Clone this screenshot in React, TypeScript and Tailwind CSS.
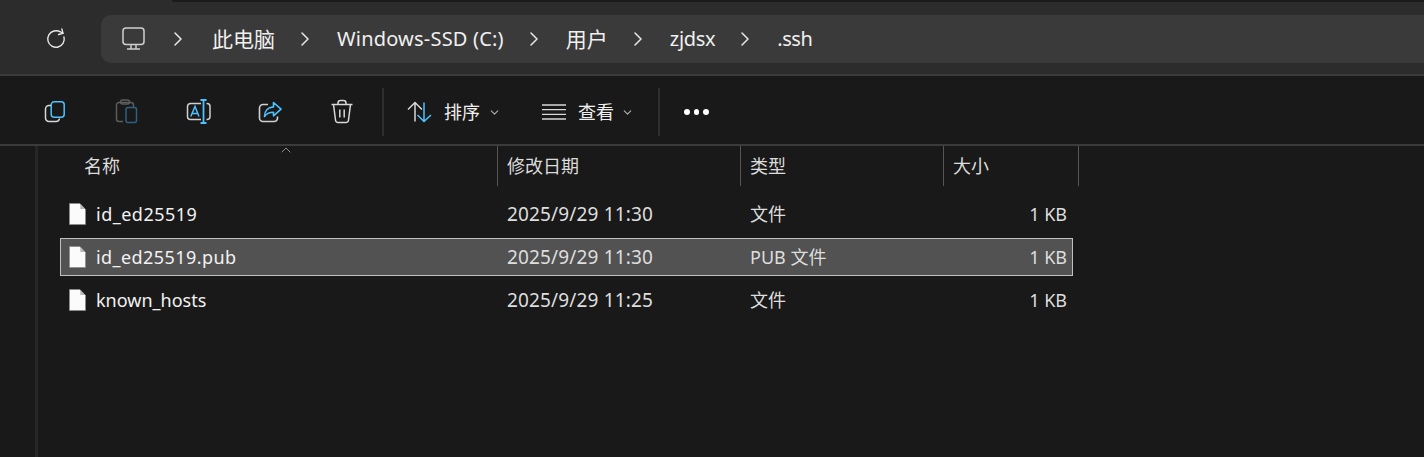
import { RotateCw, ChevronRight, ChevronDown, ChevronUp } from 'lucide-react';

const font = '[font-family:"Noto_Sans","Noto_Sans_CJK_SC",sans-serif]';

const blue = '#4cc2ff';

function CopyIcon() {
  return (
    <svg width="24" height="24" viewBox="0 0 24 24" fill="none" strokeWidth="1.5">
      <rect x="8.2" y="1.8" width="13" height="15.5" rx="3" stroke={blue} />
      <path d="M8 5.5H6A3.5 3.5 0 0 0 2.5 9v9A3.5 3.5 0 0 0 6 21.5h7a3.5 3.5 0 0 0 3.5-3" stroke="#d8d8d8" />
    </svg>
  );
}

function PasteIcon() {
  return (
    <svg width="24" height="26" viewBox="0 0 24 26" fill="none" strokeWidth="1.5">
      <path d="M9 22.5H5A2.5 2.5 0 0 1 2.5 20V6A2.5 2.5 0 0 1 5 3.5h12A2.5 2.5 0 0 1 19.5 6v2" stroke="#5c5c5c" />
      <rect x="6.5" y="1" width="9" height="4" rx="2" stroke="#5c5c5c" />
      <rect x="12" y="8.5" width="10.5" height="15" rx="2" stroke="#2c6280" />
    </svg>
  );
}

function RenameIcon() {
  return (
    <svg width="26" height="26" viewBox="0 0 26 26" fill="none" strokeWidth="1.5">
      <path d="M15 4.5H4.5A3 3 0 0 0 1.5 7.5v10a3 3 0 0 0 3 3H15" stroke="#d0d0d0" />
      <path d="M20.5 4.5h.5a3 3 0 0 1 3 3v10a3 3 0 0 1-3 3h-.5" stroke="#d0d0d0" />
      <path d="M14.5 1h6M14.5 24h6M17.5 1v23" stroke={blue} strokeWidth="1.8" />
      <path d="M4.8 17.5 9 7.5l4 10M6 14.5h6" stroke={blue} />
    </svg>
  );
}

function ShareIcon() {
  return (
    <svg width="24" height="24" viewBox="0 0 24 24" fill="none" strokeWidth="1.6">
      <path d="M10 4.5H5A3.5 3.5 0 0 0 1.5 8v10A3.5 3.5 0 0 0 5 21.500h11a3.500 3.500 0 0 0 3.500-3v-2" stroke="#d0d0d0" />
      <path d="M15.500 2.500 23 9.200l-7.500 6.600v-3.600c-4 0-7 1-9 4.300 0-5.500 3.300-9.300 9-9.600z" stroke={blue} strokeLinejoin="round" />
    </svg>
  );
}

function TrashIcon() {
  return (
    <svg width="24" height="26" viewBox="0 0 24 26" fill="none" stroke="#d8d8d8" strokeWidth="1.5">
      <path d="M1.500 5.500h21M8 5.500V4a2.500 2.500 0 0 1 2.500-2.500h3A2.500 2.500 0 0 1 16 4v1.500" />
      <path d="M3.500 5.500 5.500 21a2.500 2.500 0 0 0 2.500 2.500h8a2.500 2.500 0 0 0 2.500-2.500l2-15.500" />
      <path d="M9.800 10.500v8M14.200 10.500v8" />
    </svg>
  );
}

function SortIcon() {
  return (
    <svg width="26" height="22" viewBox="0 0 26 22" fill="none" strokeWidth="1.5">
      <path d="M8 20.500V1.500M1 8.500l7-7 7 7" stroke="#d8d8d8" />
      <path d="M17 1.500v19M10.500 14l6.500 6.500 7-6.500" stroke={blue} />
    </svg>
  );
}

function ViewIcon() {
  return (
    <svg width="24" height="16" viewBox="0 0 24 16" fill="none" stroke="#d8d8d8" strokeWidth="1.300">
      <path d="M0 1h24M0 5.700h24M0 10.300h24M0 15h24" />
    </svg>
  );
}

function MonitorIcon() {
  return (
    <svg width="24" height="24" viewBox="0 0 24 24" fill="none" stroke="#d0d0d0" strokeWidth="1.500">
      <rect x="1" y="1" width="21" height="16.500" rx="3" />
      <path d="M9 17.500v4M14 17.500v4M5 22h13" />
    </svg>
  );
}

function FileIcon() {
  return (
    <svg width="17" height="22" viewBox="0 0 18 22" preserveAspectRatio="none">
      <path d="M0.500 0.500h11l6 6v15h-17z" fill="#fbfbfb" stroke="#8a8a8a" strokeWidth="0.800" />
      <path d="M12 1v5h5z" fill="#b5b5b5" />
    </svg>
  );
}

const crumbs = [
  { label: '此电脑', chevron: 'ml-[20px]', cls: 'ml-[22px] text-[21px]' },
  { label: 'Windows-SSD (C:)', chevron: 'ml-[18px]', cls: 'ml-[20px] text-[20px] tracking-[0.2px]' },
  { label: '用户', chevron: 'ml-[18px]', cls: 'ml-[20px] text-[21px]' },
  { label: 'zjdsx', chevron: 'ml-[18px]', cls: 'ml-[20px] text-[20px] tracking-[-0.3px]' },
  { label: '.ssh', chevron: 'ml-[18px]', cls: 'ml-[20px] text-[20px] tracking-[-0.5px]' },
];

const rows = [
  { name: 'id_ed25519', date: '2025/9/29 11:30', type: '文件', selected: false, nameCls: 'tracking-[0.5px]' },
  { name: 'id_ed25519.pub', date: '2025/9/29 11:30', type: 'PUB 文件', selected: true, nameCls: 'tracking-[0.43px]' },
  { name: 'known_hosts', date: '2025/9/29 11:25', type: '文件', selected: false, nameCls: '' },
];

function Row({ name, date, type, selected, nameCls }: { name: string; date: string; type: string; selected: boolean; nameCls: string }) {
  return (
    <div
      className={`mb-[5px] flex h-[38px] w-[1013px] items-center border ${
        selected ? 'border-[#c0c0c0] bg-[#525252]' : 'border-transparent'
      }`}
    >
      <div className="flex w-[446px] items-center pl-[8px]">
        <FileIcon />
        <span className={`ml-[10px] text-[#f2f2f2] ${nameCls}`}>{name}</span>
      </div>
      <span className="w-[243px] text-[19px] tracking-[0.16px] text-[#dedede]">{date}</span>
      <span className="w-[200px] text-[#dedede]">{type}</span>
      <span className="w-[117px] text-right text-[#dedede]">1 KB</span>
    </div>
  );
}

export default function App() {
  return (
    <div className={`flex h-[457px] w-[1424px] flex-col overflow-hidden bg-[#191919] ${font}`}>
      <div className="h-[76px] shrink-0 border-b-2 border-[#3b3b3b] bg-[#2c2c2c]">
        <div className="ml-[172px] h-[2px] rounded-bl bg-[#1a1a1a]" />
        <div className="flex items-start pt-[13px]">
          <div className="flex h-[48px] w-[101px] items-center pl-[45px]">
            <RotateCw size={22} strokeWidth={1.5} color="#e8e8e8" className="-rotate-[15deg]" />
          </div>
          <div className="flex h-[48px] flex-1 items-center rounded-l-[10px] bg-[#3a3a3a] pl-[21px] text-[#f0f0f0]">
            <MonitorIcon />
            {crumbs.map(({ label, chevron, cls }) => (
              <div key={label} className="flex items-center">
                <ChevronRight size={24} strokeWidth={1.5} color="#e8e8e8" className={chevron} />
                <span className={`${cls} leading-none`}>{label}</span>
              </div>
            ))}
          </div>
        </div>
      </div>

      <div className="flex h-[70px] shrink-0 items-center border-b-2 border-[#3b3b3b] pl-[43px] pt-[4px] text-[18px] text-[#f0f0f0]">
        <div className="flex w-[71px]"><CopyIcon /></div>
        <div className="flex w-[72px]"><PasteIcon /></div>
        <div className="flex w-[72px]"><RenameIcon /></div>
        <div className="flex w-[72px]"><ShareIcon /></div>
        <div className="flex w-[52px]"><TrashIcon /></div>
        <div className="h-[48px] w-[2px] bg-[#2e2e2e]" />
        <div className="ml-[23px] flex items-center">
          <SortIcon />
          <span className="ml-[11px]">排序</span>
          <ChevronDown size={13} color="#b0b0b0" className="ml-[8px]" />
        </div>
        <div className="ml-[41px] flex items-center">
          <ViewIcon />
          <span className="ml-[12px]">查看</span>
          <ChevronDown size={13} color="#b0b0b0" className="ml-[7px]" />
        </div>
        <div className="ml-[24px] h-[48px] w-[2px] bg-[#2e2e2e]" />
        <div className="ml-[24px] flex gap-[4px]">
          <span className="h-[5.500px] w-[5.500px] rounded-full bg-white" />
          <span className="h-[5.500px] w-[5.500px] rounded-full bg-white" />
          <span className="h-[5.500px] w-[5.500px] rounded-full bg-white" />
        </div>
      </div>

      <div className="flex flex-1">
        <div className="w-[38px] shrink-0 border-r-[3px] border-[#272727]" />
        <div className="flex-1 text-[18px]">
          <div className="relative flex h-[40px] w-[1041px] text-[#dcdcdc]">
            <ChevronUp size={16} strokeWidth={1.2} color="#a8a8a8" className="absolute left-[240px] -top-[4px]" />
            <div className="flex w-[460px] items-center border-r border-[#555] pl-[46px]">名称</div>
            <div className="flex w-[243px] items-center border-r border-[#555] pl-[9px]">修改日期</div>
            <div className="flex w-[203px] items-center border-r border-[#555] pl-[9px]">类型</div>
            <div className="flex w-[135px] items-center border-r border-[#555] pl-[9px]">大小</div>
          </div>
          <div className="ml-[22px] mt-[9px]">
            {rows.map((r) => (
              <Row key={r.name} {...r} />
            ))}
          </div>
        </div>
      </div>
    </div>
  );
}
